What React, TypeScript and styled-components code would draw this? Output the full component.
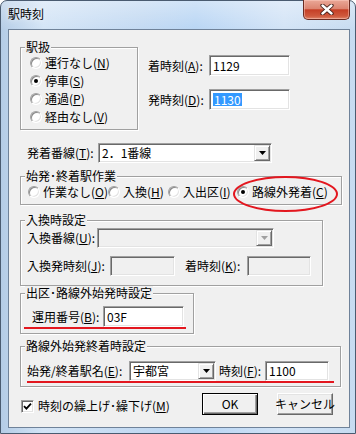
import React from "react";
import styled, { createGlobalStyle } from "styled-components";

const GlobalStyle = createGlobalStyle`
  html, body { margin: 0; padding: 0; background: #fff; }
  body {
    font-family: "Noto Sans CJK JP", "Noto Sans", sans-serif;
    font-size: 12px;
    line-height: 14px;
    color: #000;
  }
  * { box-sizing: border-box; }
`;

const RED = "#e3171f";

const S = {
  Window: styled.div`
    width: 356px;
    height: 434px;
    border: 1px solid #4a5b70;
    border-radius: 7px 7px 0 0;
    padding: 0 5px 5px 7px;
    display: flex;
    flex-direction: column;
    background:
      linear-gradient(to bottom, rgba(255, 255, 255, 0.35), rgba(255, 255, 255, 0) 30px),
      linear-gradient(to right, #b4cce6 0%, #d3e4f6 12%, #c2d9f2 40%, #b8d5f4 55%, #d2e3f6 80%, #c6dbf1 100%);
  `,
  TitleBar: styled.div`
    height: 28px;
    display: flex;
    align-items: flex-start;
  `,
  Title: styled.div`
    padding-top: 6px;
    font-size: 12px;
    line-height: 14px;
    text-shadow: 0 0 5px rgba(255, 255, 255, 0.9);
  `,
  CloseButton: styled.div`
    margin-left: auto;
    margin-top: -1px;
    width: 47px;
    height: 20px;
    border: 1px solid #6a2b22;
    border-top: none;
    border-radius: 0 0 5px 5px;
    background: linear-gradient(to bottom, #eaa898 0%, #dc8571 45%, #c53f26 52%, #cf5a3e 85%, #e0866b 100%);
    box-shadow: inset 0 0 0 1px rgba(255, 210, 200, 0.45);
    display: flex;
    align-items: center;
    justify-content: center;
  `,
  Client: styled.div`
    width: 342px;
    height: 399px;
    border: 1px solid #6f8299;
    background: #f0f0f0;
    padding: 0 16px 0 11px;
    display: flex;
    flex-direction: column;
    align-items: flex-start;
  `,
  TopSection: styled.div`
    display: flex;
    align-items: flex-start;
  `,
  Group: styled.div<{ $w: number; $mt: number; $pb: number }>`
    width: ${({ $w }) => $w}px;
    margin-top: ${({ $mt }) => $mt}px;
    padding-bottom: ${({ $pb }) => $pb}px;
    border: 1px solid #a0a0a0;
    box-shadow: 1px 1px 0 #fff, inset 1px 1px 0 #fff;
    display: flex;
    flex-direction: column;
    align-items: flex-start;
  `,
  Legend: styled.div`
    margin: -8px 0 0 4px;
    padding: 0 1px;
    height: 14px;
    background: #f0f0f0;
    white-space: nowrap;
  `,
  RadioColumn: styled.div`
    padding-left: 9px;
    display: flex;
    flex-direction: column;
  `,
  RadioRow: styled.div`
    padding-left: 7px;
    display: grid;
    grid-template-columns: 80px 60px 69px auto;
  `,
  RadioItem: styled.label<{ $marked?: boolean }>`
    position: relative;
    height: 18px;
    display: flex;
    align-items: center;
    gap: 3px;
    white-space: nowrap;
    &::before {
      content: "";
      display: ${({ $marked }) => ($marked ? "block" : "none")};
      position: absolute;
      left: -4px;
      top: -7px;
      width: 101px;
      height: 32px;
      border: 2px solid ${RED};
      border-radius: 50%;
    }
  `,
  RadioDot: styled.span<{ $checked?: boolean }>`
    flex: none;
    width: 12px;
    height: 12px;
    border-radius: 50%;
    background: #fff;
    border: 1px solid;
    border-color: #a0a0a0 #fff #fff #a0a0a0;
    box-shadow: inset 1px 1px 0 #8a8a8a, inset -1px -1px 0 #e3e3e3;
    display: flex;
    align-items: center;
    justify-content: center;
    &::after {
      content: "";
      display: ${({ $checked }) => ($checked ? "block" : "none")};
      width: 4px;
      height: 4px;
      border-radius: 50%;
      background: #000;
    }
  `,
  TimeGrid: styled.div`
    margin: 25px 0 0 10px;
    display: grid;
    grid-template-columns: 61px 81px;
    grid-auto-rows: 21px;
    row-gap: 13px;
    align-items: center;
  `,
  FieldRow: styled.div<{ $mt?: number; $pl?: number }>`
    margin-top: ${({ $mt }) => $mt ?? 0}px;
    padding-left: ${({ $pl }) => $pl ?? 0}px;
    display: flex;
    align-items: center;
  `,
  MarkedRow: styled.div<{ $ml: number; $w: number; $pt: number; $pl: number }>`
    margin-left: ${({ $ml }) => $ml}px;
    width: ${({ $w }) => $w}px;
    padding-top: ${({ $pt }) => $pt}px;
    padding-left: ${({ $pl }) => $pl}px;
    border-bottom: 2px solid ${RED};
    display: flex;
    align-items: center;
  `,
  Label: styled.span<{ $w?: number; $ml?: number }>`
    flex: none;
    width: ${({ $w }) => ($w ? `${$w}px` : "auto")};
    margin-left: ${({ $ml }) => $ml ?? 0}px;
    white-space: nowrap;
  `,
  Edit: styled.div<{ $w: number; $h?: number; $disabled?: boolean }>`
    flex: none;
    width: ${({ $w }) => $w}px;
    height: ${({ $h }) => $h ?? 21}px;
    background: ${({ $disabled }) => ($disabled ? "#f0f0f0" : "#fff")};
    border: 1px solid;
    border-color: #a0a0a0 #fff #fff #a0a0a0;
    box-shadow: inset 1px 1px 0 #696969, inset -1px -1px 0 #e3e3e3;
    padding: 0 3px;
    display: flex;
    align-items: center;
    white-space: nowrap;
  `,
  Selected: styled.span`
    background: #3399ff;
    color: #fff;
    padding: 0 1px;
    line-height: 13px;
  `,
  Combo: styled.div<{ $w: number; $disabled?: boolean }>`
    flex: none;
    width: ${({ $w }) => $w}px;
    height: 20px;
    background: ${({ $disabled }) => ($disabled ? "#f0f0f0" : "#fff")};
    border: 1px solid;
    border-color: #a0a0a0 #fff #fff #a0a0a0;
    box-shadow: inset 1px 1px 0 #696969, inset -1px -1px 0 #e3e3e3;
    padding: 1px;
    display: flex;
    align-items: center;
  `,
  ComboText: styled.span`
    flex: 1;
    padding-left: 2px;
    white-space: nowrap;
  `,
  DropButton: styled.span`
    flex: none;
    width: 16px;
    height: 16px;
    background: #f0f0f0;
    border: 1px solid;
    border-color: #e3e3e3 #696969 #696969 #e3e3e3;
    box-shadow: inset 1px 1px 0 #fff, inset -1px -1px 0 #a0a0a0;
    display: flex;
    align-items: center;
    justify-content: center;
  `,
  BottomRow: styled.div`
    margin-top: 6px;
    width: 100%;
    height: 22px;
    display: flex;
    align-items: flex-start;
  `,
  CheckBox: styled.span`
    flex: none;
    margin: 7px 0 0 1px;
    width: 13px;
    height: 13px;
    background: #fff;
    border: 1px solid;
    border-color: #a0a0a0 #fff #fff #a0a0a0;
    box-shadow: inset 1px 1px 0 #696969, inset -1px -1px 0 #e3e3e3;
    display: flex;
    align-items: center;
    justify-content: center;
  `,
  CheckLabel: styled.span`
    margin: 6px 0 0 4px;
    white-space: nowrap;
  `,
  Buttons: styled.div`
    margin-left: auto;
    display: flex;
    gap: 19px;
  `,
  PushButton: styled.div<{ $default?: boolean }>`
    width: 56px;
    height: 22px;
    background: #f0f0f0;
    border: 1px solid;
    border-color: ${({ $default }) => ($default ? "#000" : "#fff #696969 #696969 #fff")};
    box-shadow: ${({ $default }) =>
      $default
        ? "inset 1px 1px 0 #fff, inset -1px -1px 0 #696969, inset -2px -2px 0 #a0a0a0"
        : "inset -1px -1px 0 #a0a0a0, inset 1px 1px 0 #e3e3e3"};
    display: flex;
    align-items: center;
    justify-content: center;
    white-space: nowrap;
  `,
};

const Arrow = ({ disabled }: { disabled?: boolean }) => (
  <svg width="7" height="4" viewBox="0 0 7 4">
    <polygon points="0,0 7,0 3.5,4" fill={disabled ? "#a0a0a0" : "#000"} />
  </svg>
);

const Radio = ({ checked, marked, children }: { checked?: boolean; marked?: boolean; children: React.ReactNode }) => (
  <S.RadioItem $marked={marked}>
    <S.RadioDot $checked={checked} />
    <span>{children}</span>
  </S.RadioItem>
);

const Combo = ({ w, value, disabled }: { w: number; value?: string; disabled?: boolean }) => (
  <S.Combo $w={w} $disabled={disabled}>
    <S.ComboText>{value}</S.ComboText>
    <S.DropButton>
      <Arrow disabled={disabled} />
    </S.DropButton>
  </S.Combo>
);

export default function App() {
  return (
    <>
      <GlobalStyle />
      <S.Window>
        <S.TitleBar>
          <S.Title>駅時刻</S.Title>
          <S.CloseButton>
            <svg width="14" height="11" viewBox="0 0 14 11">
              <path d="M2.5 1.5 L11.5 9.5 M11.5 1.5 L2.5 9.5" stroke="#3d1a14" strokeWidth="4.2" strokeLinecap="round" />
              <path d="M2.5 1.5 L11.5 9.5 M11.5 1.5 L2.5 9.5" stroke="#fff" strokeWidth="2.4" strokeLinecap="round" />
            </svg>
          </S.CloseButton>
        </S.TitleBar>

        <S.Client>
          <S.TopSection>
            <S.Group $w={118} $mt={17} $pb={3}>
              <S.Legend>駅扱</S.Legend>
              <S.RadioColumn>
                <Radio>運行なし(<u>N</u>)</Radio>
                <Radio checked>停車(<u>S</u>)</Radio>
                <Radio>通過(<u>P</u>)</Radio>
                <Radio>経由なし(<u>V</u>)</Radio>
              </S.RadioColumn>
            </S.Group>
            <S.TimeGrid>
              <S.Label>着時刻(<u>A</u>):</S.Label>
              <S.Edit $w={81}>1129</S.Edit>
              <S.Label>発時刻(<u>D</u>):</S.Label>
              <S.Edit $w={81}>
                <S.Selected>1130</S.Selected>
              </S.Edit>
            </S.TimeGrid>
          </S.TopSection>

          <S.FieldRow $mt={13} $pl={7}>
            <S.Label $w={71}>発着番線(<u>T</u>):</S.Label>
            <Combo w={174} value="2．1番線" />
          </S.FieldRow>

          <S.Group $w={322} $mt={13} $pb={3}>
            <S.Legend>始発･終着駅作業</S.Legend>
            <S.RadioRow>
              <Radio>作業なし(<u>O</u>)</Radio>
              <Radio>入換(<u>H</u>)</Radio>
              <Radio>入出区(<u>I</u>)</Radio>
              <Radio checked marked>路線外発着(<u>C</u>)</Radio>
            </S.RadioRow>
          </S.Group>

          <S.Group $w={303} $mt={15} $pb={9}>
            <S.Legend>入換時設定</S.Legend>
            <S.FieldRow $mt={1} $pl={6}>
              <S.Label $w={70}>入換番線(<u>U</u>):</S.Label>
              <Combo w={177} disabled />
            </S.FieldRow>
            <S.FieldRow $mt={8} $pl={6}>
              <S.Label $w={83}>入換発時刻(<u>J</u>):</S.Label>
              <S.Edit $w={65} $h={20} $disabled />
              <S.Label $w={62} $ml={10}>着時刻(<u>K</u>):</S.Label>
              <S.Edit $w={64} $h={20} $disabled />
            </S.FieldRow>
          </S.Group>

          <S.Group $w={174} $mt={7} $pb={4}>
            <S.Legend>出区･路線外始発時設定</S.Legend>
            <S.MarkedRow $ml={3} $w={162} $pt={6} $pl={8}>
              <S.Label $w={71}>運用番号(<u>B</u>):</S.Label>
              <S.Edit $w={81}>03F</S.Edit>
            </S.MarkedRow>
          </S.Group>

          <S.Group $w={321} $mt={12} $pb={3}>
            <S.Legend>路線外始発終着時設定</S.Legend>
            <S.MarkedRow $ml={6} $w={307} $pt={8} $pl={0}>
              <S.Label $w={102}>始発/終着駅名(<u>E</u>):</S.Label>
              <Combo w={87} value="宇都宮" />
              <S.Label $w={46} $ml={3}>時刻(<u>F</u>):</S.Label>
              <S.Edit $w={64} $h={20}>1100</S.Edit>
            </S.MarkedRow>
          </S.Group>

          <S.BottomRow>
            <S.CheckBox>
              <svg width="9" height="9" viewBox="0 0 9 9">
                <path d="M1 4.2 L3.4 6.6 L8 1.6" stroke="#000" strokeWidth="1.8" fill="none" />
              </svg>
            </S.CheckBox>
            <S.CheckLabel>時刻の繰上げ･繰下げ(<u>M</u>)</S.CheckLabel>
            <S.Buttons>
              <S.PushButton $default>OK</S.PushButton>
              <S.PushButton>キャンセル</S.PushButton>
            </S.Buttons>
          </S.BottomRow>
        </S.Client>
      </S.Window>
    </>
  );
}
